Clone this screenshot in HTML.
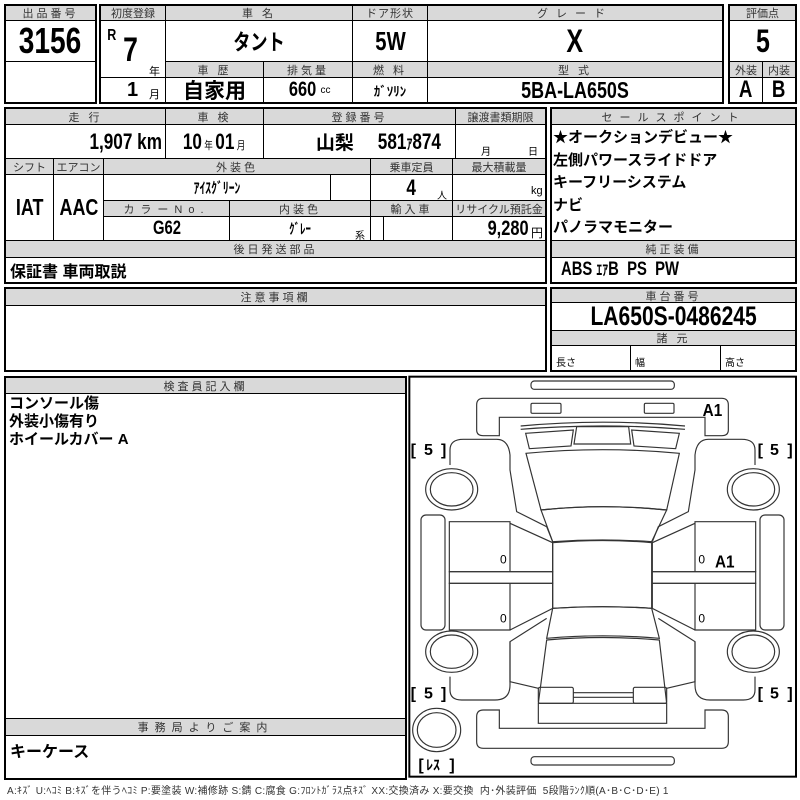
<!DOCTYPE html>
<html><head><meta charset="utf-8">
<style>
*{margin:0;padding:0;box-sizing:border-box}
body{width:800px;height:800px;background:#fff;position:relative;overflow:hidden;font-family:"Liberation Sans","Noto Sans CJK JP",sans-serif;color:#000}
.c{position:absolute;border:1px solid #000;display:flex;align-items:center;justify-content:center;white-space:nowrap;overflow:hidden}
.h{background:#d9d9d9;font-family:"Liberation Sans","Noto Sans CJK JP",sans-serif;font-size:11px;color:#333;letter-spacing:3px}
.v{font-weight:bold}
.o{position:absolute;border:2px solid #000}
.s{position:absolute;font-size:10px;font-family:"Liberation Sans","Noto Sans CJK JP",sans-serif;font-weight:normal}
.jp{font-family:"Liberation Sans","Noto Sans CJK JP",sans-serif;font-weight:bold}
.n{display:inline-block;transform:scaleX(.78)}
.nr{display:inline-block;transform:scaleX(.78);transform-origin:right center}
.nl{display:inline-block;transform:scaleX(.78);transform-origin:left center}
</style></head><body>

<!-- 出品番号 -->
<div class="c h" style="left:5px;top:5px;width:91px;height:16px">出品番号</div>
<div class="c v" style="left:5px;top:20px;width:91px;height:42px;font-size:36px"><span class="n">3156</span></div>
<div class="c" style="left:5px;top:61px;width:91px;height:42px"></div>
<div class="o" style="left:4px;top:4px;width:93px;height:100px"></div>

<!-- main top -->
<div class="c h" style="left:100px;top:5px;width:66px;height:16px;letter-spacing:0">初度登録</div>
<div class="c h" style="left:165px;top:5px;width:188px;height:16px">車 名</div>
<div class="c h" style="left:352px;top:5px;width:76px;height:16px;letter-spacing:1px">ドア形状</div>
<div class="c h" style="left:427px;top:5px;width:296px;height:16px;letter-spacing:8px">グレード</div>
<div class="c" style="left:100px;top:20px;width:66px;height:58px">
 <span class="v" style="position:absolute;left:5px;top:6px;font-size:16px"><span class="n">R</span></span>
 <span class="v" style="position:absolute;left:20px;top:10px;font-size:34px"><span class="n">7</span></span>
 <span class="s" style="left:48px;top:42px;font-size:11px">年</span></div>
<div class="c" style="left:100px;top:77px;width:66px;height:26px">
 <span class="v" style="position:absolute;left:26px;top:1px;font-size:20px">1</span>
 <span class="s" style="left:48px;top:8px;font-size:11px">月</span></div>
<div class="c v jp" style="left:165px;top:20px;width:188px;height:42px;font-size:22px"><span class="n">タント</span></div>
<div class="c v" style="left:352px;top:20px;width:76px;height:42px;font-size:26px"><span class="n">5W</span></div>
<div class="c v" style="left:427px;top:20px;width:296px;height:42px;font-size:32px"><span class="n">X</span></div>
<div class="c h" style="left:165px;top:61px;width:99px;height:17px">車 歴</div>
<div class="c h" style="left:263px;top:61px;width:90px;height:17px">排気量</div>
<div class="c h" style="left:352px;top:61px;width:76px;height:17px">燃 料</div>
<div class="c h" style="left:427px;top:61px;width:296px;height:17px">型 式</div>
<div class="c v jp" style="left:165px;top:77px;width:99px;height:26px;font-size:21px">自家用</div>
<div class="c v" style="left:263px;top:77px;width:90px;height:26px;font-size:21px"><span class="n">660</span><span class="s" style="position:static;font-size:10px">cc</span></div>
<div class="c v jp" style="left:352px;top:77px;width:76px;height:26px;font-size:13px">ｶﾞｿﾘﾝ</div>
<div class="c v" style="left:427px;top:77px;width:296px;height:26px;font-size:23px"><span class="n">5BA-LA650S</span></div>
<div class="o" style="left:99px;top:4px;width:625px;height:100px"></div>

<!-- 評価点 -->
<div class="c h" style="left:729px;top:5px;width:67px;height:16px;letter-spacing:0">評価点</div>
<div class="c v" style="left:729px;top:20px;width:67px;height:42px;font-size:32px"><span class="n">5</span></div>
<div class="c h" style="left:729px;top:61px;width:34px;height:17px;letter-spacing:0">外装</div>
<div class="c h" style="left:762px;top:61px;width:34px;height:17px;letter-spacing:0">内装</div>
<div class="c v" style="left:729px;top:77px;width:34px;height:26px;font-size:24px"><span class="n">A</span></div>
<div class="c v" style="left:762px;top:77px;width:34px;height:26px;font-size:24px"><span class="n">B</span></div>
<div class="o" style="left:728px;top:4px;width:69px;height:100px"></div>

<!-- second block -->
<div class="c h" style="left:5px;top:108px;width:161px;height:17px">走 行</div>
<div class="c h" style="left:165px;top:108px;width:99px;height:17px">車 検</div>
<div class="c h" style="left:263px;top:108px;width:193px;height:17px">登録番号</div>
<div class="c h" style="left:455px;top:108px;width:91px;height:17px;letter-spacing:0">譲渡書類期限</div>
<div class="c v" style="left:5px;top:124px;width:161px;height:35px;font-size:22px;justify-content:flex-end;padding-right:3px"><span class="nr">1,907 km</span></div>
<div class="c v" style="left:165px;top:124px;width:99px;height:35px;font-size:22px"><span class="n">10<span class="s" style="position:static;font-size:11px">&nbsp;年&nbsp;</span>01<span class="s" style="position:static;font-size:11px">&nbsp;月</span></span></div>
<div class="c v" style="left:263px;top:124px;width:193px;height:35px;font-size:22px;justify-content:flex-end;padding-right:14px"><span class="jp" style="font-size:19px">山梨</span>&nbsp;<span class="nr">581<span class="jp" style="font-size:15px">ｱ</span>874</span></div>
<div class="c" style="left:455px;top:124px;width:91px;height:35px"><span class="s" style="left:25px;top:18px">月</span><span class="s" style="left:72px;top:18px">日</span></div>
<div class="c h" style="left:5px;top:158px;width:49px;height:17px;letter-spacing:0">シフト</div>
<div class="c h" style="left:53px;top:158px;width:51px;height:17px;letter-spacing:0">エアコン</div>
<div class="c h" style="left:103px;top:158px;width:268px;height:17px">外装色</div>
<div class="c h" style="left:370px;top:158px;width:83px;height:17px;letter-spacing:0">乗車定員</div>
<div class="c h" style="left:452px;top:158px;width:94px;height:17px;letter-spacing:0">最大積載量</div>
<div class="c v" style="left:5px;top:174px;width:49px;height:67px;font-size:23px"><span class="n">IAT</span></div>
<div class="c v" style="left:53px;top:174px;width:51px;height:67px;font-size:23px"><span class="n">AAC</span></div>
<div class="c v jp" style="left:103px;top:174px;width:228px;height:27px;font-size:15px"><span class="n">ｱｲｽｸﾞﾘｰﾝ</span></div>
<div class="c" style="left:330px;top:174px;width:41px;height:27px"></div>
<div class="c v" style="left:370px;top:174px;width:83px;height:27px;font-size:22px"><span class="n">4</span><span class="s" style="left:66px;top:12px">人</span></div>
<div class="c" style="left:452px;top:174px;width:94px;height:27px"><span class="s" style="left:78px;top:10px;font-size:11px">kg</span></div>
<div class="c h" style="left:103px;top:200px;width:127px;height:17px;letter-spacing:6px">カラーNo.</div>
<div class="c h" style="left:229px;top:200px;width:142px;height:17px">内装色</div>
<div class="c h" style="left:370px;top:200px;width:83px;height:17px">輸入車</div>
<div class="c h" style="left:452px;top:200px;width:94px;height:17px;letter-spacing:0">リサイクル預託金</div>
<div class="c v" style="left:103px;top:216px;width:127px;height:25px;font-size:19px"><span class="n">G62</span></div>
<div class="c v jp" style="left:229px;top:216px;width:142px;height:25px;font-size:14px"><span class="n">ｸﾞﾚｰ</span><span class="s" style="left:125px;top:10px">系</span></div>
<div class="c" style="left:370px;top:216px;width:14px;height:25px"></div>
<div class="c" style="left:383px;top:216px;width:70px;height:25px"></div>
<div class="c v" style="left:452px;top:216px;width:94px;height:25px;font-size:21px;justify-content:flex-end;padding-right:16px"><span class="nr">9,280</span><span class="s" style="left:78px;top:7px;font-size:12px">円</span></div>
<div class="c h" style="left:5px;top:240px;width:541px;height:18px">後日発送部品</div>
<div class="c v jp" style="left:5px;top:257px;width:541px;height:26px;font-size:16px;justify-content:flex-start;padding-left:4px">保証書 車両取説</div>
<div class="o" style="left:4px;top:107px;width:543px;height:177px"></div>

<!-- sales point -->
<div class="c h" style="left:551px;top:108px;width:245px;height:17px;letter-spacing:7px">セールスポイント</div>
<div class="c" style="left:551px;top:124px;width:245px;height:117px;display:block">
 <div class="jp" style="font-size:15px;line-height:22.5px;padding:2px 0 0 1px">★オークションデビュー★<br>左側パワースライドドア<br>キーフリーシステム<br>ナビ<br>パノラマモニター</div></div>
<div class="c h" style="left:551px;top:240px;width:245px;height:18px">純正装備</div>
<div class="c v" style="left:551px;top:257px;width:245px;height:26px;font-size:19px;justify-content:flex-start;padding-left:9px"><span class="nl">ABS <span class="jp" style="font-size:15px">ｴｱ</span>B&nbsp; PS&nbsp; PW</span></div>
<div class="o" style="left:550px;top:107px;width:247px;height:177px"></div>

<!-- 注意事項 -->
<div class="c h" style="left:5px;top:288px;width:541px;height:18px">注意事項欄</div>
<div class="c" style="left:5px;top:305px;width:541px;height:66px"></div>
<div class="o" style="left:4px;top:287px;width:543px;height:85px"></div>

<!-- 車台番号 -->
<div class="c h" style="left:551px;top:288px;width:245px;height:15px">車台番号</div>
<div class="c v" style="left:551px;top:302px;width:245px;height:29px;font-size:27px"><span class="n">LA650S-0486245</span></div>
<div class="c h" style="left:551px;top:330px;width:245px;height:16px">諸 元</div>
<div class="c" style="left:551px;top:345px;width:80px;height:26px"><span class="s" style="left:4px;top:8px">長さ</span></div>
<div class="c" style="left:630px;top:345px;width:91px;height:26px"><span class="s" style="left:4px;top:8px">幅</span></div>
<div class="c" style="left:720px;top:345px;width:76px;height:26px"><span class="s" style="left:4px;top:8px">高さ</span></div>
<div class="o" style="left:550px;top:287px;width:247px;height:85px"></div>

<!-- 検査員 -->
<div class="c h" style="left:5px;top:377px;width:401px;height:17px">検査員記入欄</div>
<div class="c" style="left:5px;top:393px;width:401px;height:326px;display:block">
 <div class="jp" style="font-size:15px;line-height:18px;padding:1px 0 0 3px">コンソール傷<br>外装小傷有り<br>ホイールカバー A</div></div>
<div class="c h" style="left:5px;top:718px;width:401px;height:18px;letter-spacing:6px">事務局よりご案内</div>
<div class="c v jp" style="left:5px;top:735px;width:401px;height:44px;font-size:16px;justify-content:flex-start;padding-left:4px;align-items:flex-start;padding-top:2px">キーケース</div>
<div class="o" style="left:4px;top:376px;width:403px;height:404px"></div>

<!-- diagram -->
<svg style="position:absolute;left:400px;top:370px" width="400" height="430" viewBox="0 0 1200 1290">
<g fill="none" stroke="#333" stroke-width="3.5">
<rect x="28" y="20" width="1160" height="1200" stroke="#000" stroke-width="6"/>
<rect x="393" y="33" width="430" height="25" rx="10"/>
<path d="M250 85H965Q985 85 985 105V180Q985 197 965 197H915V142H298V197H250Q230 197 230 180V105Q230 85 250 85Z"/>
<rect x="393" y="100" width="90" height="30" rx="4"/>
<rect x="733" y="100" width="89" height="30" rx="4"/>
<path d="M362 168Q608 145 855 168M362 178Q608 158 855 178"/>
<path d="M377 190L520 180L513 228L388 236Z"/>
<path d="M838 190L695 180L702 228L827 236Z"/>
<path d="M530 170L686 170L692 222L522 222Z"/>
<path d="M378 250Q608 228 838 250L800 420Q608 400 423 420Z"/>
<path d="M423 420Q608 400 800 420L755 515Q608 505 458 515Z"/>
<path d="M458 518Q608 505 755 518V715Q608 705 458 715Z"/>
<path d="M458 715Q608 705 755 715L778 805Q608 790 440 805Z"/>
<path d="M440 810Q608 795 778 810L800 1000V1060H415V1000Z"/>
<line x1="415" y1="1000" x2="800" y2="1000"/>
<rect x="415" y="952" width="105" height="48" rx="5"/>
<rect x="700" y="952" width="100" height="48" rx="5"/>
<path d="M520 968H700M520 982H700"/>
<path d="M250 1020H298V1075H915V1020H965Q985 1020 985 1040V1115Q985 1135 965 1135H250Q230 1135 230 1115V1040Q230 1020 250 1020Z"/>
<rect x="393" y="1160" width="430" height="25" rx="10"/>
<g id="L">
<path d="M150 285V240Q150 208 190 208H290Q325 208 330 255V300L350 425L440 470L458 515"/>
<path d="M148 455H330V605H148ZM330 460L458 518V605H330"/>
<path d="M148 605H458V640H148Z"/>
<path d="M148 640H330V780H148ZM330 640H458V715L330 780"/>
<path d="M150 920V960Q150 990 185 990H285Q330 990 330 945V815L440 745"/>
<path d="M330 815V935L415 955"/>
<rect x="63" y="435" width="72" height="345" rx="15"/>
<ellipse cx="155" cy="358" rx="78" ry="62"/>
<ellipse cx="155" cy="358" rx="64" ry="50"/>
<ellipse cx="155" cy="845" rx="78" ry="62"/>
<ellipse cx="155" cy="845" rx="64" ry="50"/>
</g>
<use href="#L" transform="translate(1215,0) scale(-1,1)"/>
<ellipse cx="110" cy="1080" rx="72" ry="65"/>
<ellipse cx="110" cy="1080" rx="58" ry="52"/>
</g>
<g font-family="Liberation Sans, Noto Sans CJK JP, sans-serif" font-weight="bold" fill="#000">
<text x="908" y="138" font-size="54" transform="translate(908,0) scale(.85,1) translate(-908,0)">A1</text>
<text x="945" y="592" font-size="54" transform="translate(945,0) scale(.85,1) translate(-945,0)">A1</text>
<g font-size="48" font-weight="bold">
<text x="32" y="255">[</text><text x="72" y="255">5</text><text x="123" y="255">]</text>
<text x="1073" y="255">[</text><text x="1110" y="255">5</text><text x="1162" y="255">]</text>
<text x="32" y="985">[</text><text x="72" y="985">5</text><text x="123" y="985">]</text>
<text x="1073" y="985">[</text><text x="1110" y="985">5</text><text x="1162" y="985">]</text>
<text x="55" y="1200">[</text><text x="148" y="1200">]</text>
</g>
<text x="78" y="1200" font-size="42" font-family="Noto Sans CJK JP, sans-serif">ﾚｽ</text>
<g font-size="36" font-weight="normal">
<text x="300" y="580">0</text><text x="300" y="758">0</text>
<text x="895" y="580">0</text><text x="895" y="758">0</text>
</g>
</g>
</svg>

<div class="s" style="left:7px;top:782px;font-size:10px;color:#333;white-space:nowrap;letter-spacing:0.3px">A:ｷｽﾞ U:ﾍｺﾐ B:ｷｽﾞを伴うﾍｺﾐ P:要塗装 W:補修跡 S:錆 C:腐食 G:ﾌﾛﾝﾄｶﾞﾗｽ点ｷｽﾞ XX:交換済み X:要交換 &nbsp;内･外装評価 &nbsp;5段階ﾗﾝｸ順(A･B･C･D･E) 1</div>
</body></html>
